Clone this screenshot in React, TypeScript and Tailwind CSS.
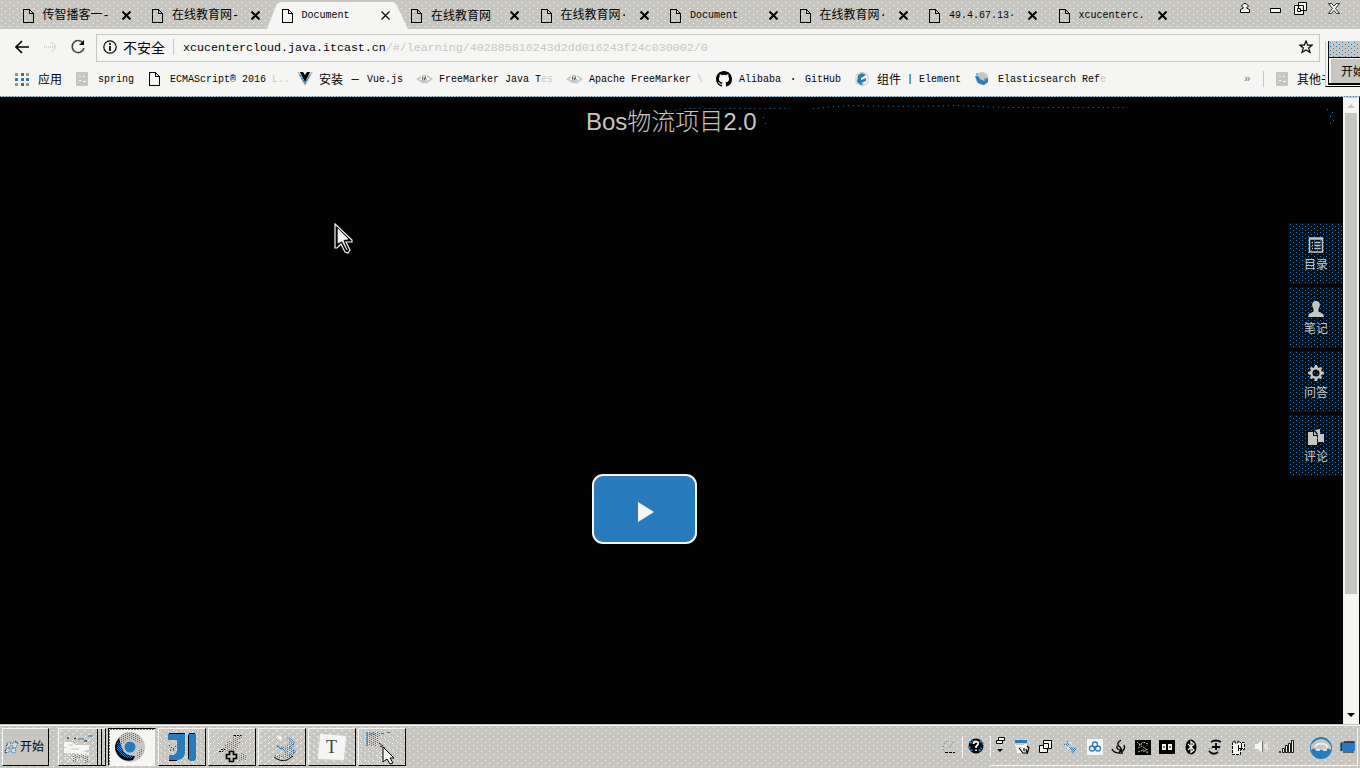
import React from 'react';

const MONO = "font-['Liberation_Mono','Noto_Sans_CJK_SC',monospace]";
const CJK = "font-['Noto_Sans_CJK_SC',sans-serif]";
const DITHER_WHITE =
  '[background-image:conic-gradient(at_1px_1px,transparent_75%,#f5f5f3_0),conic-gradient(at_1px_1px,transparent_75%,#f5f5f3_0)] [background-size:8px_6px] [background-position:1px_2px,5px_5px]';
const DITHER_BLUE =
  '[background-image:conic-gradient(at_1px_1px,transparent_75%,#287bbc_0),conic-gradient(at_1px_1px,transparent_75%,#287bbc_0)] [background-size:6px_4px] [background-position:1px_1px,4px_3px]';

function PageIcon() {
  return (
    <svg width="11" height="14" viewBox="0 0 11 14" fill="none" stroke="#030303" className="block shrink-0" shapeRendering="crispEdges">
      <path d="M.5 .5H6.5L10.5 4.5V13.5H.5ZM6.5 .5V4.5H10.5" />
    </svg>
  );
}

const tabs = [
  { t: '传智播客', dash: '一-' },
  { t: '在线教育网', dash: '-' },
  { t: 'Document', active: true },
  { t: '在线教育网' },
  { t: '在线教育网', dash: '·' },
  { t: 'Document' },
  { t: '在线教育网', dash: '·' },
  { t: '49.4.67.13·' },
  { t: 'xcucenterc.' },
];

function Tab({ t, dash, active }: { t: string; dash?: string; active?: boolean }) {
  return (
    <div className="relative flex h-[29px] w-[129.5px] shrink-0 items-center pt-[2px]">
      {active && (
        <svg className="absolute -left-[15px] top-[2px]" width="141" height="27" viewBox="0 0 141 27">
          <path d="M0 27L9 4Q11 0 14 0H125Q128 0 130 4L141 27Z" fill="#f5f5f3" />
        </svg>
      )}
      <div className="relative flex w-full items-center">
        <PageIcon />
        <span className={'ml-[9px] w-[74px] whitespace-nowrap leading-[16px] text-[#030303] ' + (/^[\x00-\x7f·]+$/.test(t) ? MONO + ' text-[10px]' : CJK + ' -mt-[1px] text-[12px]')}>
          {t}
          {dash && <span className="font-['Liberation_Mono','Noto_Sans_CJK_SC',monospace]">{dash}</span>}
        </span>
        <svg className="ml-[5px]" width="9" height="9" viewBox="0 0 9 9" stroke="#030303" strokeWidth={active ? 1.1 : 2}>
          <path d="M.5 .5L8.5 8.5M8.5 .5L.5 8.5" />
        </svg>
      </div>
    </div>
  );
}

const apps = (
  <svg width="17" height="15" shapeRendering="crispEdges">
    {[0, 6, 11].map((x) => [1, 6, 11].map((y) => <rect key={x + '-' + y} x={x} y={y} width="3" height="3" fill={y === 6 ? '#287bbc' : x === 6 ? '#66635f' : '#96948f'} />))}
  </svg>
);
const folder = (
  <svg width="13" height="14" shapeRendering="crispEdges">
    <path d="M0 0H12V14H0Z" fill="#c8c6c0" /><path d="M3 4h2M7 4h2M3 8h2M7 9h3" stroke="#f5f5f3" />
  </svg>
);
const vue = (
  <svg width="16" height="14" viewBox="0 0 16 14">
    <path d="M0 0H4L8 7L12 0H16L8 14Z" fill="#c8c6c0" /><path d="M3 0H6L8 3L10 0H13L8 10Z" fill="#030303" /><path d="M3 3L8 11L13 3" fill="none" stroke="#287bbc" strokeWidth="1.5" strokeDasharray="2 1" />
  </svg>
);
const marker = (
  <svg width="17" height="10" viewBox="0 0 17 10">
    <path d="M0 5L5 2V4L3 5L6 7V9ZM17 5L11 1V3L14 5L10 8V10ZM6 1H10V9H6Z" fill="#c8c6c0" /><path d="M6 4h1M9 4h1M8 5h1" stroke="#030303" /><path d="M6 6h1M10 6h1" stroke="#287bbc" />
  </svg>
);
const github = (
  <svg width="16" height="16" viewBox="0 0 16 16" fill="#030303">
    <path d="M8 0C3.58 0 0 3.58 0 8c0 3.54 2.29 6.53 5.47 7.59.4.07.55-.17.55-.38v-1.49c-2.01.37-2.53-.49-2.69-.94-.09-.23-.48-.94-.82-1.13-.28-.15-.68-.52-.01-.53.63-.01 1.08.58 1.23.82.72 1.21 1.87.87 2.33.66.07-.52.28-.87.51-1.07-1.78-.2-3.64-.89-3.64-3.95 0-.87.31-1.59.82-2.15-.08-.2-.36-1.02.08-2.12 0 0 .67-.21 2.2.82a7.42 7.42 0 014 0c1.53-1.04 2.2-.82 2.2-.82.44 1.1.16 1.92.08 2.12.51.56.82 1.27.82 2.15 0 3.07-1.87 3.75-3.65 3.95.29.25.54.73.54 1.48v2.2c0 .21.15.46.55.38A8.01 8.01 0 0016 8c0-4.42-3.58-8-8-8z" />
  </svg>
);
const element = (
  <svg width="15" height="16" viewBox="0 0 15 16">
    <path d="M7 1L13 4V12L7 15L1 12V4Z" fill="#f5f5f3" stroke="#c8c6c0" /><path d="M3 4L7 2L11 4L6 7V9L11 7V10L6 12L9 13L6 14L2 11Z" fill="#287bbc" />
  </svg>
);
const elastic = (
  <svg width="14" height="14" viewBox="0 0 14 14">
    <circle cx="7" cy="6.5" r="6.5" fill="#c8c6c0" /><path d="M0 4H3L5 7L9 9L13 6V10L9 13L3 11Z" fill="#287bbc" /><path d="M1 2h2M9 7h3" stroke="#287bbc" />
  </svg>
);
const bookmarks = [
  { icon: apps, text: '应用', w: 'w-[61px]', i: 'w-[23px]' },
  { icon: folder, text: 'spring', w: 'w-[73px]', i: 'w-[22px]' },
  { icon: <PageIcon />, text: 'ECMAScript® 2016 ', tail: 'L..', w: 'w-[148px]', i: 'w-[21px]' },
  { icon: vue, text: '安装 — Vue.js', w: 'w-[119px]', i: 'w-[22px]' },
  { icon: marker, text: 'FreeMarker Java T', tail: 'es', w: 'w-[150px]', i: 'w-[23px]' },
  { icon: marker, text: 'Apache FreeMarker ', tail: '\\', w: 'w-[150px]', i: 'w-[23px]' },
  { icon: github, text: 'Alibaba · GitHub', w: 'w-[139px]', i: 'w-[23px]' },
  { icon: element, text: '组件 | Element', w: 'w-[120px]', i: 'w-[22px]' },
  { icon: elastic, text: 'Elasticsearch Ref', tail: 'e', w: 'w-[269px]', i: 'w-[23px]' },
];

function Mixed({ text }: { text: string }) {
  const parts = text.split(/([\u4e00-\u9fff]+|—|·)/).filter(Boolean);
  return (
    <>
      {parts.map((p, i) => {
        if (/[\u4e00-\u9fff]/.test(p)) return <span key={i} className={CJK + ' -mt-[1px] text-[12px]'}>{p}</span>;
        if (/[—·]/.test(p)) return <span key={i} className="w-[12px] text-center text-[12px]">{p}</span>;
        return <span key={i}>{p}</span>;
      })}
    </>
  );
}

function Bookmarks() {
  return (
    <div className={'flex h-[34px] items-center overflow-hidden whitespace-pre pl-[15px] text-[10px] leading-[16px] text-[#030303] ' + MONO}>
      {bookmarks.map((b, k) => (
        <div key={k} className={'flex shrink-0 items-center ' + b.w}>
          <span className={'flex shrink-0 ' + b.i}>{b.icon}</span>
          <span className="flex items-center pt-[1px]"><Mixed text={b.text} /><span className="text-[#c8c6c0]">{b.tail}</span></span>
        </div>
      ))}
      <span className="w-[19px] shrink-0 text-[11px] text-[#77756f]">»</span>
      <span className="mr-[12px] h-[16px] w-px shrink-0 bg-[#c8c6c0]" />
      <span className="w-[21px] shrink-0">{folder}</span>
      <span className={'shrink-0 text-[12px] ' + CJK}>其他书</span>
    </div>
  );
}

const side = [
  {
    t: '目录',
    icon: <g fill="none" stroke="#c8c6c0" strokeWidth="1.5"><path d="M1.5 1H14.5V15H1.5ZM1.5 2H14.5" /><path d="M4 5.5H5M6.5 5.5H12.5M4 8.5H5M6.5 8.5H12.5M4 11.5H5M6.5 11.5H12.5" strokeWidth="1.3" /></g>,
  },
  { t: '笔记', icon: <path d="M5 1Q8-1 11 1Q13 4 10.500 8V10.500L15 13L16 16H0L1 13L5.500 10.500V8Q3 4 5 1Z" fill="#c8c6c0" /> },
  {
    t: '问答',
    icon: <path fillRule="evenodd" fill="#c8c6c0" d="M7 0H9L10 3L13 2L14 3L13 6L16 7V9L13 10L14 13L13 14L10 13L9 16H7L6 13L3 14L2 13L3 10L0 9V7L3 6L2 3L3 2L6 3ZM8 4.500A3.500 3.500 0 1 0 8 11.500A3.500 3.500 0 1 0 8 4.500Z" />,
  },
  { t: '评论', icon: <g fill="#c8c6c0"><path d="M0 3H5V7H9V16H0ZM6 2L9 6H6Z" /><path d="M7 1L12 0V5H16V13H10V5Z" /></g> },
];

function Cursor() {
  return (
    <svg width="20" height="31" viewBox="0 0 20 31">
      <path d="M1 1L18 17V19H12L16 27L14 30L11 29L7 21L3 25H1Z" fill="#030303" stroke="#f5f5f3" strokeWidth="1.2" />
      <path d="M4 6L14 16L9 17L13 27L8 18L4 20Z" fill="#f5f5f3" stroke="#f5f5f3" strokeWidth=".7" />
    </svg>
  );
}

function Patterns() {
  return (
    <svg width="0" height="0" className="absolute">
      <defs>
        <pattern id="blueDots" width="4" height="2" patternUnits="userSpaceOnUse">
          <path d="M0 0H1V1H0ZM2 1H3V2H2Z" fill="#287bbc" shapeRendering="crispEdges" />
        </pattern>
        <pattern id="blueDense" width="2" height="2" patternUnits="userSpaceOnUse">
          <path d="M0 0H1V1H0ZM1 1H2V2H1Z" fill="#287bbc" shapeRendering="crispEdges" />
        </pattern>
        <pattern id="whiteDots" width="4" height="4" patternUnits="userSpaceOnUse">
          <path d="M0 0H1V1H0ZM2 2H3V3H2Z" fill="#f5f5f3" shapeRendering="crispEdges" />
        </pattern>
      </defs>
    </svg>
  );
}

const taskIcons = [
  <>
    <path d="M5 13H12L17 16H30V21L24 22L30 24V26H20L16 24H5V19L9 18H5Z" fill="#f5f5f3" /><path d="M5 24H31V34H5Z" fill="url(#whiteDots)" /><path d="M10 16H14M12 20H20" stroke="#c8c6c0" /><path d="M13 33V28L17 25H26L29 28V34H25V29H18V33Z" fill="url(#blueDots)" /><path d="M19 10H25M29 7H34" stroke="#287bbc" /><path d="M8 9H10M15 10L17 9M25 12H28" stroke="#030303" />
  </>,
  <>
    <circle cx="21" cy="18" r="15" fill="#c8c6c0" /><path d="M9 11Q13 3 21 3Q31 4 33 13L28 14Q20 8 13 16L10 14Z" fill="url(#blueDots)" /><path d="M10 9Q3 17 8 25Q14 34 24 31L26 27Q15 27 12 17Z" fill="#030303" /><path d="M9 12Q5 20 11 25Q16 30 23 29L24 27Q14 26 12 15Z" fill="url(#blueDense)" /><path d="M27 27L32 18L35 22L30 30Z" fill="url(#blueDots)" /><circle cx="21" cy="18" r="7.500" fill="#c8c6c0" /><circle cx="21" cy="18" r="5.500" fill="#287bbc" />
  </>,
  <>
    <path d="M9 5H26V24Q25 31 18 31H10V26H14Q18 25 18 21V11H9ZM29 5H37V30L35 32H31L29 30Z" fill="#287bbc" /><path d="M10 4.500H26M30 4.500H36M29.500 6V30M10 31.500H18" stroke="#030303" /><path d="M10 16L14 20L17 17M11 21H15" stroke="#030303" fill="none" strokeDasharray="1 2" />
  </>,
  <>
    <path d="M23 6H33V9L29 12H24ZM12 22L19 12H32L28 20L20 23ZM31 24L37 25V31L30 32Z" fill="url(#blueDots)" /><path d="M25 6.500H32M10 22.500H14M12 20.500H16" stroke="#030303" strokeDasharray="2 1" /><path d="M20.500 22.500H24.500V25.500H27.500V29.500H24.500V32.500H20.500V29.500H17.500V25.500H20.500Z" fill="#c8c6c0" stroke="#030303" strokeWidth="1.700" />
  </>,
  <>
    <path d="M28 8Q38 13 34 19Q38 25 30 29H17L13 26H24L27 21L17 19V16L26 18L30 15Z" fill="url(#blueDots)" /><path d="M30 9L35 14L31 18L36 23L30 27M18 17L27 22" stroke="url(#blueDense)" strokeWidth="1.5" fill="none" /><path d="M15 28Q21 33 28 31L34 27" stroke="#030303" fill="none" /><path d="M19 6L23 8L22 11L19 10Z" fill="#f5f5f3" />
  </>,
  <>
    <path d="M11 5L37 7L35 31L9 30Z" fill="#f5f5f3" />
  </>,
  <>
    <path d="M7 3H21V7H20V13L17 17H7Z" fill="url(#blueDots)" /><path d="M8 3V17M10 5H16M22 4.500H25M28 3.500H31" stroke="#287bbc" /><path d="M21 17L26 19M20 14L24 17" stroke="#030303" strokeDasharray="2 1" /><path d="M17 21H26V33H19Z" fill="url(#whiteDots)" />
  </>,
];

function TaskButton({ icon, k }: { icon: React.ReactNode; k: number }) {
  const active = k === 1;
  return (
    <div className={'relative flex h-[38px] w-[48px] items-center justify-center border ' + (active ? 'border-t-[#030303] border-l-[#030303] border-r-[#c8c6c0] border-b-[#f5f5f3] bg-[#f5f5f3]' : 'border-t-[#f5f5f3] border-l-[#f5f5f3] border-r-[#030303] border-b-[#030303] ' + DITHER_WHITE)}>
      <svg width="46" height="36" viewBox="0 0 46 36" className="block">
        {icon}
        {k === 0 && <path d="M38.5 0V36M42.5 0V36" stroke="#030303" />}
        {active && <path d="M.5 36V.5H46" fill="none" stroke="#77756f" strokeDasharray="2 1" />}
      </svg>
      {k === 5 && <span className="absolute left-[17px] top-[8px] font-['Liberation_Serif',serif] text-[18px] leading-[20px] text-[#474542]">T</span>}
    </div>
  );
}

const tray1: React.ReactNode[] = [
  <><path d="M2 8L4 3L8 2M2 10L4 13M8 9L13 2" fill="none" stroke="#287bbc" strokeDasharray="1 2" /><path d="M4 13.500H14" stroke="#030303" strokeDasharray="3 1" /></>,
  <><circle cx="8" cy="8" r="7.5" fill="#030303" /><path d="M2 5L5 2M1 9L4 13M12 3L15 6M11 13L14 10" stroke="#287bbc" strokeWidth="2.500" strokeDasharray="2 1" /><path d="M5.5 6Q5.5 3.5 8 3.5Q11 4 10 6.5L8 8.5V10M8 11.5V13" stroke="#f5f5f3" strokeWidth="1.8" fill="none" /></>,
];
const tray2: React.ReactNode[] = [
  <><path d="M0 1H12V4H0Z" fill="#287bbc" /><path d="M0 5H12V14H2Z" fill="#f5f5f3" /><path d="M1 5.500H9M3 8.500H7" stroke="#c8c6c0" /><path d="M4 9L8 14H12L11 10M9 9V12M12 7L14 9L12 15" fill="none" stroke="#030303" strokeWidth="1.200" /><path d="M8 11L13 15" stroke="#287bbc" strokeDasharray="1 1" /></>,
  <g fill="#f5f5f3" stroke="#030303"><path d="M4.500 1.500H12.500V9.500H4.500ZM.5 6.500H8.500V13.500H.5Z" /><path d="M4.500 4.500H9.500V9.500H4.500Z" /></g>,
  <><path d="M1 5.500H8M4.500 2V8" stroke="#287bbc" strokeDasharray="1 1" /><path d="M6 8L14 9L10 15Z" fill="url(#blueDense)" /><path d="M8 3V6M4 9H6" stroke="#f5f5f3" /></>,
  <><path d="M0 0H16V16H0Z" fill="#f5f5f3" /><g fill="none" stroke="#287bbc" strokeWidth="1.3"><circle cx="8" cy="5.500" r="2.500" /><circle cx="5" cy="9.500" r="2.500" /><circle cx="11" cy="9.500" r="2.500" /></g></>,
  <path d="M10 1Q4 5 9 8Q12 11 8 13M13 6Q15 10 10 13M6 7Q5 11 11 11M1 10Q3 15 12 14" fill="none" stroke="#030303" strokeWidth="1.4" />,
  <><path d="M0 1H16V16H0Z" fill="#030303" /><path d="M2 3L5 6L8 3L13 5M3 9L7 7L12 11M3 13L8 11L13 14" fill="none" stroke="#c8c6c0" strokeDasharray="2 1" /><path d="M3 4H7V8H3ZM8 9H13V13H8Z" fill="url(#blueDots)" /></>,
  <><path d="M0 1H16V15H0Z" fill="#030303" /><path d="M3 5H7V11H3ZM9 5H13V11H9Z" fill="#f5f5f3" /><path d="M5 7V9M11 7V9" stroke="#030303" /></>,
  <><ellipse cx="8" cy="8" rx="5.500" ry="7.500" fill="#030303" /><path d="M5 5L11 11L8 13.500V2.500L11 5L5 11" fill="none" stroke="#f5f5f3" strokeWidth="1.2" /></>,
  <><path d="M4 3Q9 0 14 3M5 8H13M9 4V11M2 12Q6 17 11 13" fill="none" stroke="#030303" strokeWidth="1.800" /><path d="M2 10L6 9M11 12L14 7" stroke="#287bbc" strokeDasharray="1 1" /></>,
  <><path d="M1.500 3.500L4 1.500V4H7V1.500L9 3.500H13.500V10.500H9.500V15.500H1.500Z" fill="#f5f5f3" stroke="#030303" strokeDasharray="3 1" /><path d="M7.500 6V12M10.500 4V9M8 9.500H12" stroke="#030303" /></>,
  <><path d="M0 5H3L7 1V14L3 10H0Z" fill="#f5f5f3" /><path d="M7.500 2V13" stroke="#77756f" /><path d="M10 5V10M12 3V12" stroke="#f5f5f3" /></>,
  <g fill="#f5f5f3" stroke="#030303" strokeWidth=".9"><path d="M.5 12.500H1.500V13.500H.5ZM3.500 9.500H5.500V13.500H3.500ZM6.500 6.500H8.500V13.500H6.500ZM9.500 4.500H11.500V13.500H9.500ZM12.500 1.500H14.500V13.500H12.500Z" /></g>,
];

function Taskbar() {
  return (
    <div className={'flex h-[44px] w-full border-t border-[#c8c6c0] bg-[#c8c6c0] shadow-[inset_0_1px_0_#f5f5f3] ' + DITHER_WHITE}>
      <div className="flex w-[944px] shrink-0 pl-[2px] pt-[3px]">
        <div className="mr-[9px] flex h-[38px] w-[47px] items-center border border-b-[#030303] border-l-[#f5f5f3] border-r-[#030303] border-t-[#f5f5f3] bg-[#c8c6c0] pl-[1px]">
          <svg width="16" height="16" viewBox="0 0 16 16" className="shrink-0"><path d="M3 4L7 3L6 8L2 9ZM9 3L14 4L12 9L8 8ZM2 10L6 9L5 13L1 14ZM8 9L12 10L11 14L7 13Z" fill="#dcdad6" stroke="#287bbc" strokeDasharray="1.5 1" strokeWidth=".9" /><path d="M11 2L14 4M2 7L4 5M1 11L2 14" stroke="#030303" strokeDasharray="1 1" /></svg>
          <span className={'-mt-[2px] whitespace-nowrap text-[12px] leading-[16px] text-[#030303] ' + CJK}>开始</span>
        </div>
        <div className="flex gap-[2px]">{taskIcons.map((icon, k) => <TaskButton key={k} icon={icon} k={k} />)}</div>
      </div>
      <div className="mt-[3px] flex h-[38px] w-[414px] shrink-0 items-center border-r border-[#f5f5f3]">
        <div className="flex h-[22px] w-[18px] shrink-0 items-center">
          <svg width="16" height="16" className="-ml-[3px] shrink-0">{tray1[0]}</svg>
        </div>
        <div className="flex h-[22px] w-[28px] shrink-0 items-center border-l border-[#f5f5f3] pl-[5px]">
          <svg width="16" height="16" className="-mt-[3px] shrink-0">{tray1[1]}</svg>
        </div>
        <div className="flex h-[38px] grow items-center shadow-[inset_0_-1px_0_#f5f5f3]">
          <div className="flex h-[22px] w-[26px] shrink-0 border-l border-[#f5f5f3] pl-[5px]">
            <svg width="10" height="18"><path d="M2.500 1.500H8.500V4.500H2.500ZM.5 4.500H6.500V7.500H.5Z" fill="#f5f5f3" stroke="#030303" /><path d="M1 13H7L4 16Z" fill="#030303" /></svg>
          </div>
          {tray2.map((el, k) => (
            <svg key={k} width="16" height="16" className="-ml-[1px] mr-[9px] shrink-0">{el}</svg>
          ))}
          <svg width="24" height="24" viewBox="0 0 24 24" className="ml-[5px] mt-[2px] shrink-0"><circle cx="12" cy="12" r="11" fill="#287bbc" /><path d="M2 9Q7 3 12 3Q18 3 22 10V14Q18 11 17 14H7Q5 11 2 14Z" fill="#c8c6c0" /><path d="M6 11Q8 7 12 8Q17 7 19 12M7 14H11M14 14H18" stroke="#f5f5f3" strokeWidth="1.500" fill="none" /></svg>
          <svg width="15" height="16" className="ml-[7px] shrink-0"><path d="M1 3L15 2V12H1Z" fill="#287bbc" /><path d="M1 4V12M3 13H14M4 3H14" stroke="#030303" /></svg>
        </div>
      </div>
    </div>
  );
}

export default function App() {
  return (
    <div className="relative flex h-[768px] w-[1360px] flex-col overflow-hidden bg-[#f5f5f3]">
      <Patterns />
      <div className={'flex h-[29px] shrink-0 bg-[#c8c6c0] pl-[22.500px] ' + DITHER_WHITE}>
        {tabs.map((t, k) => <Tab key={k} t={t.t} dash={t.dash} active={t.active} />)}
        <svg width="110" height="20" viewBox="0 0 110 20" className="ml-[49px] shrink-0" fill="#f5f5f3" stroke="#030303">
          <path d="M7 3.500H9L11.500 6L9.500 8L12.500 9.500V12.500H3.500V9.500L6.500 8L4.500 6Z" />
          <path d="M33.500 8.500H43.500V12.500H33.500Z" />
          <path d="M61.500 2.500H69.500V10.500H61.500ZM57.500 5.500H66.500V14.500H57.500Z" /><path d="M60.500 8.500H63.500V11.500H60.500Z" />
          <path d="M91.500 3.500H94.500L97 6L99.500 3.500H102.500L98.500 8.500L102.500 13.500H99.500L97 10.500L94.500 13.500H91.500L95.500 8.500Z" strokeWidth=".8" />
        </svg>
      </div>

      <div className="flex h-[33px] shrink-0 items-end pl-[15px]">
        <svg width="81" height="28" className="shrink-0">
          <path d="M14 13H1M7 7L1 13L7 19" fill="none" stroke="#030303" strokeWidth="1.7" />
          <path d="M29 13H41M36 8L41 13L36 18" fill="none" stroke="#d4d2cd" strokeDasharray="1 1" strokeWidth="2" />
          <path d="M68 9A6 6 0 1 0 69 14" fill="none" stroke="#474542" strokeWidth="1.6" /><path d="M69 6V11H64Z" fill="#030303" />
        </svg>
        <div className="flex h-[28px] w-[1224px] shrink-0 items-center border border-[#c8c6c0] pb-[2px] pl-[6px]">
          <svg width="14" height="14" viewBox="0 0 14 14"><circle cx="7" cy="7" r="6.2" fill="none" stroke="#030303" strokeWidth="1.2" /><path d="M7 3V5M7 6V11" stroke="#030303" strokeWidth="1.7" /></svg>
          <span className={'-mt-[1px] ml-[6px] w-[50px] whitespace-nowrap text-[14px] leading-[20px] text-[#030303] ' + CJK}>不安全</span>
          <span className="h-[16px] w-px bg-[#c8c6c0]" />
          <span className={'ml-[9px] whitespace-pre pt-[2px] text-[11.660px] leading-[16px] text-[#030303] ' + MONO}>xcucentercloud.java.itcast.cn<span className="text-[#c8c6c0]">/#/learning/402885816243d2dd016243f24c030002/0</span></span>
          <svg width="14" height="14" viewBox="0 0 14 14" className="ml-auto mr-[6px]"><path d="M7 1L8.700 5.200H13L9.700 8L11 12.500L7 10L3 12.500L4.300 8L1 5.200H5.300Z" fill="none" stroke="#030303" strokeWidth="1.2" /></svg>
        </div>
      </div>
      <Bookmarks />
      <div className="h-px shrink-0 bg-[#c8c6c0] [background-image:conic-gradient(at_1px_1px,transparent_75%,#287bbc_0)] [background-size:3px_1px]" />

      <div className="flex h-[627px] shrink-0 bg-[#030303]">
        <div className="flex w-[1343px] shrink-0">
          <div className="flex w-[1289px] flex-col">
            <h1 className="ml-[586px] mt-[7px] h-[36px] whitespace-nowrap font-['Liberation_Sans','Noto_Sans_CJK_SC',sans-serif] text-[24px] font-light leading-[36px] text-[#c8c6c0]">Bos物流项目2.0</h1>
            <button className="ml-[592px] mt-[334px] flex h-[70px] w-[105px] items-center justify-center rounded-[11px] border-2 border-[#f5f5f3] bg-[#287bbc]">
              <svg width="18" height="20" className="ml-[2px] mt-[5px]"><path d="M1 0L17 10L1 20Z" fill="#f5f5f3" /></svg>
            </button>
          </div>
          <nav className="mt-[126px] flex w-[53px] flex-col gap-[3px]">
            {side.map((s) => (
              <div key={s.t} className={'flex h-[61px] flex-col items-center bg-[#04111b] pl-[1px] pt-[14px] ' + DITHER_BLUE}>
                <svg width="16" height="16" viewBox="0 0 16 16">{s.icon}</svg>
                <span className={'mt-[3px] text-[12px] leading-[16px] text-[#c8c6c0] ' + CJK}>{s.t}</span>
              </div>
            ))}
          </nav>
        </div>
        <div className="flex w-[16px] flex-col items-center bg-[#f5f5f3]">
          <svg width="12" height="16"><path d="M2 11L6 7L10 11Z" fill="#c8c6c0" /><path d="M0 .5H12" stroke="#c8c6c0" /></svg>
          <div className="h-[481px] w-[12px] bg-[#c8c6c0]" />
          <svg width="12" height="11" className="mt-auto"><path d="M2 0H10L6 4Z" fill="#030303" /></svg>
        </div>
      </div>
      <Taskbar />

      <svg className="absolute left-[660px] top-[103px]" width="680" height="24">
        <path d="M5 10L24 5.500H130M153 5.500L190 2.500L240 3.500L300 2.500L345 4.500H468" fill="none" stroke="#287bbc" strokeDasharray="1 4" />
        <path d="M667 6.500h1M672 9.500h1M670 13.500h1M673 17.500h1M670 20.500h1M103 14.500h1M105 20.500h1" stroke="#287bbc" />
      </svg>
      <div className="absolute left-[334px] top-[223px]"><Cursor /></div>
      <div className="absolute left-[382px] top-[746px] h-[20px] w-[13px]">
        <svg width="13" height="20" viewBox="0 0 13 20"><path d="M1 1L12 12H8L11 17L8 18L5 13L1 16Z" fill="#f5f5f3" stroke="#030303" /></svg>
      </div>
      <div className="absolute left-[1325px] top-[41px] flex h-[46px] w-[35px] flex-col border-b border-l border-[#c8c6c0] border-b-[#030303] bg-[#f5f5f3] pl-[2px]">
        <div className={'h-[16px] shrink-0 border-l border-[#030303] bg-[#c8c6c0] ' + DITHER_BLUE} />
        <div className={'h-[28px] shrink-0 whitespace-nowrap border-b-2 border-l border-t border-[#030303] bg-[#c8c6c0] pl-[12px] pt-[3px] text-[12px] leading-[20px] text-[#030303] shadow-[inset_2px_1px_0_#f5f5f3] ' + CJK}>开始</div>
      </div>
    </div>
  );
}
